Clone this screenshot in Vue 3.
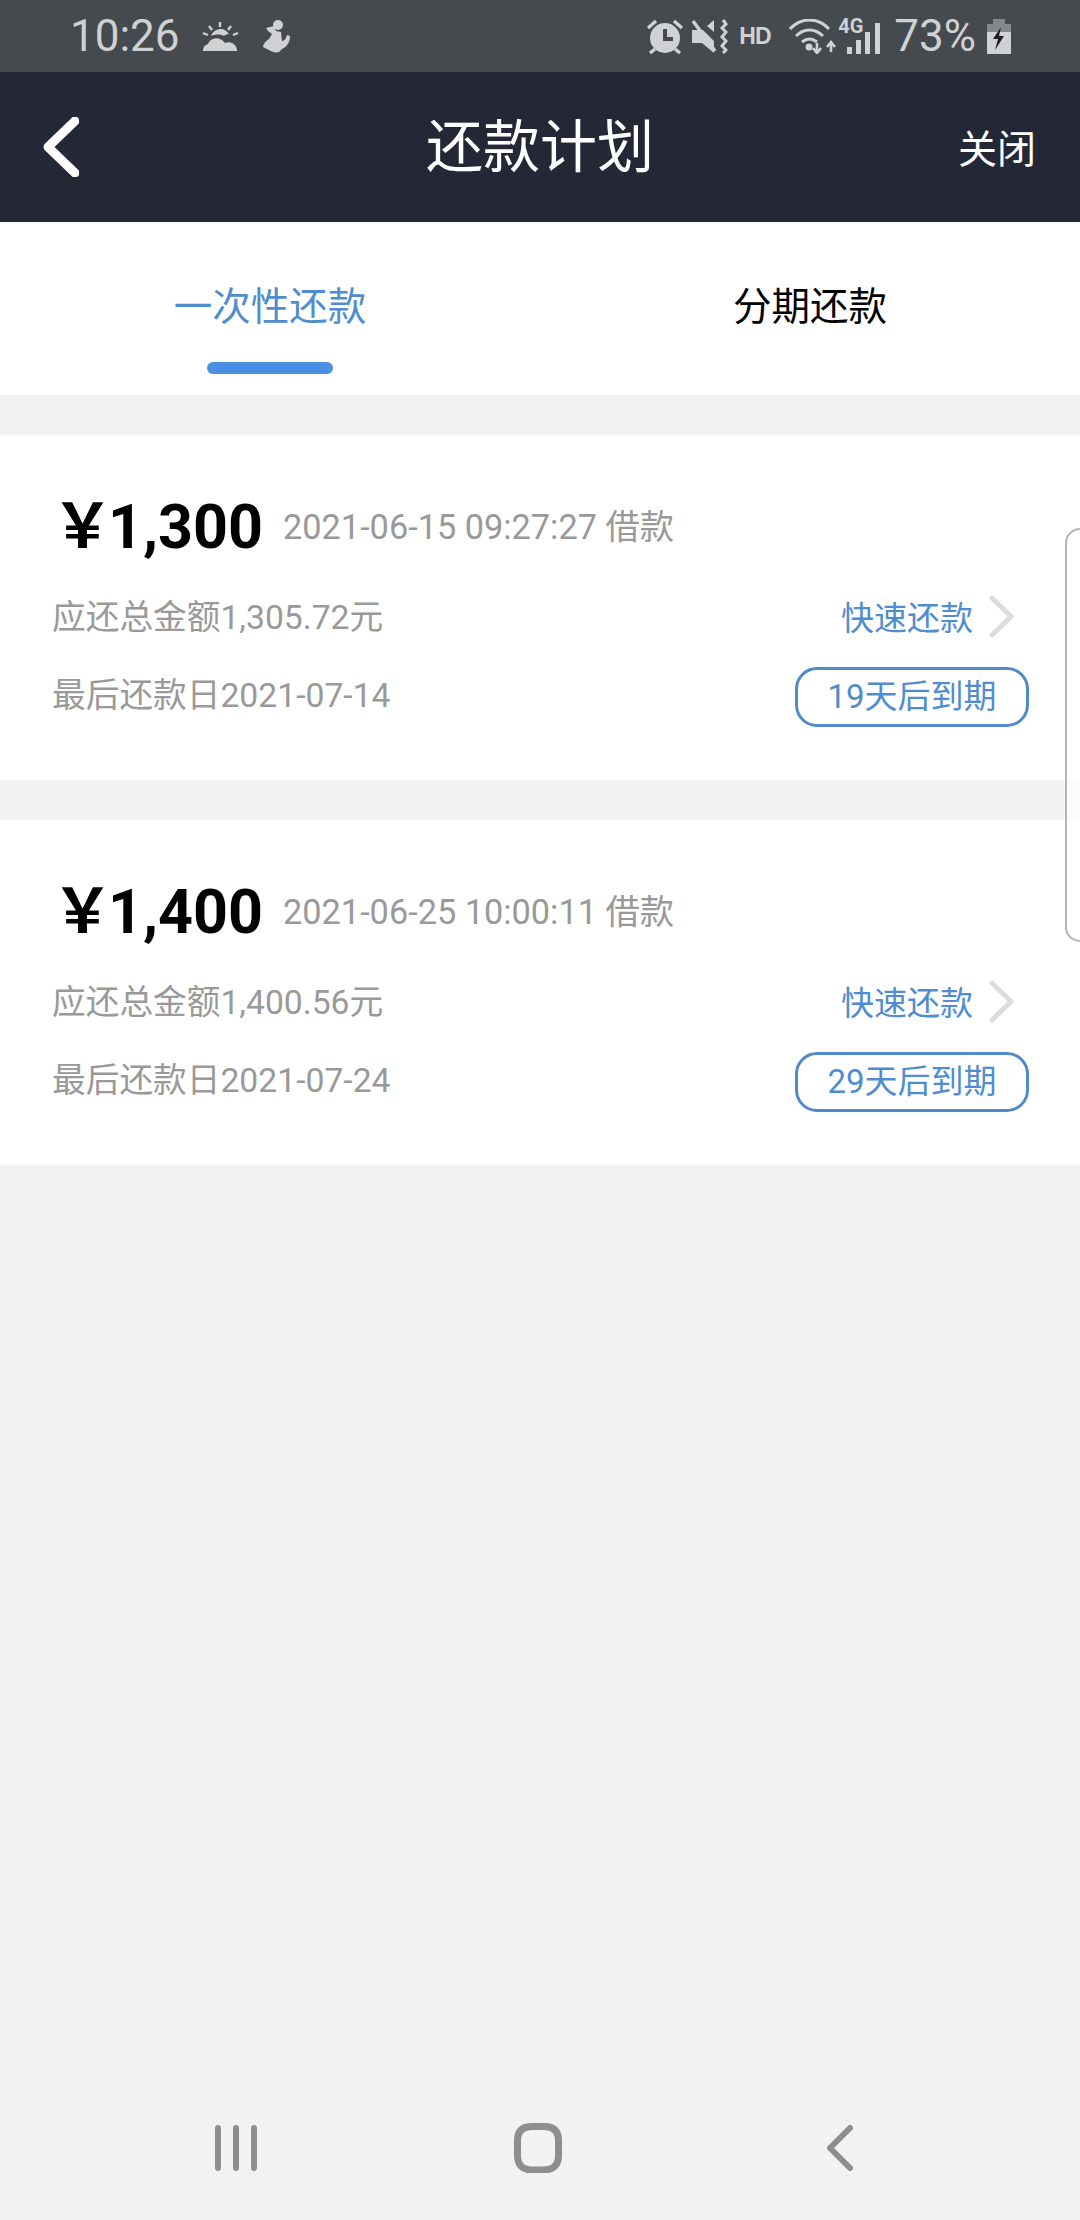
<script setup>
const currency = "\uFFE5";
const loans = [
  { amount: "1,300", time: "2021-06-15 09:27:27 借款", total: "应还总金额1,305.72元", last: "最后还款日2021-07-14", due: "19天后到期" },
  { amount: "1,400", time: "2021-06-25 10:00:11 借款", total: "应还总金额1,400.56元", last: "最后还款日2021-07-24", due: "29天后到期" },
];
</script>

<template>
  <div class="page">
    <div class="status">
      <span class="clock">10:26</span>
      <svg class="ic-weather" width="37" height="29" viewBox="0 0 37 29" fill="none">
        <path d="M18 0v5M7 4l3 4M29 4l-3 4M1 11l5 2M36 11l-5 2" stroke="#cfd1d3" stroke-width="2.4" />
        <path d="M9 14c2-5 6-7 10-7 3 0 6 2 8 5-2 0-4 1-5 2-3-2-9-2-13 0z" fill="#cfd1d3" />
        <path d="M1 29c0-4 2-6 5-7 2-5 8-7 12-5 3 1 4 3 5 4 5-2 10 1 11 4 1 2 1 3 1 4z" fill="#cfd1d3" />
      </svg>
      <svg class="ic-runner" width="29" height="33" viewBox="0 0 29 33" fill="#cfd1d3">
        <circle cx="16" cy="5" r="5" />
        <path d="M4 8l8-2 2 5 5 1 1 9c2 0 4-2 5-6l3 1c0 6-3 11-8 13l-3 3c-3 1-7 0-10-2l-6-3c0-3 3-6 6-8l3-5-4-3z" />
      </svg>
      <span class="grow"></span>
      <svg class="ic-alarm" width="38" height="35" viewBox="0 0 38 35" fill="none">
        <circle cx="19" cy="19" r="15" fill="#cfd1d3" />
        <path d="M19 10v10h8" stroke="#454a4e" stroke-width="4" />
        <path d="M2 9l8-7M36 9l-8-7M9 30l-5 4M29 30l5 4" stroke="#cfd1d3" stroke-width="3.5" />
      </svg>
      <svg class="ic-mute" width="36" height="35" viewBox="0 0 36 35" fill="none">
        <path d="M5 11h6l11 11v12L10 24H0V11z" fill="#cfd1d3" />
        <path d="M15 7l7-6v12z" fill="#cfd1d3" />
        <path d="M1 2l22 30" stroke="#cfd1d3" stroke-width="3.5" />
        <path d="M31 1l3 4-4 4 4 4-4 5 4 4-4 5 4 4-3 3" stroke="#cfd1d3" stroke-width="3" />
      </svg>
      <span class="hd">HD</span>
      <svg class="ic-wifi" width="48" height="35" viewBox="0 0 48 35" fill="none">
        <path d="M1 10c11-12 28-12 39 0M7 17c8-8 19-8 27 0M13 23c5-4 10-4 15 0" stroke="#cfd1d3" stroke-width="3" />
        <circle cx="20" cy="28" r="3.500" fill="#cfd1d3" />
        <path d="M28 24v8M24 29l4 5 4-5M42 33v-8M38 28l4-5 4 5" stroke="#cfd1d3" stroke-width="2.6" />
      </svg>
      <div class="signal">
        <span class="g4">4G</span>
        <svg width="33" height="31" viewBox="0 0 33 31" fill="#cfd1d3">
          <rect x="0" y="24" width="5" height="7" />
          <rect x="9" y="17" width="5" height="14" />
          <rect x="18" y="9" width="5" height="22" />
          <rect x="28" y="0" width="5" height="31" />
        </svg>
      </div>
      <span class="pct">73%</span>
      <svg class="ic-batt" width="24" height="35" viewBox="0 0 24 35">
        <path d="M6 0h12v5h6v9H0V5h6z" fill="#85888b" />
        <path d="M0 12h24v23H0z" fill="#cfd1d3" />
        <path d="M0 5h24v8H0z" fill="#85888b" />
        <path d="M14 8L6 20h5l-3 11 9-14h-5z" fill="#1d1f22" />
      </svg>
    </div>

    <div class="bar">
      <svg class="back" width="37" height="60" viewBox="0 0 37 60" fill="none">
        <path d="M33 4L6 30l27 26" stroke="#fff" stroke-width="9" stroke-linecap="round" stroke-linejoin="round" />
      </svg>
      <span class="title">还款计划</span>
      <span class="close">关闭</span>
    </div>

    <div class="tabs">
      <div class="tab active">
        <span>一次性还款</span>
        <i class="line"></i>
      </div>
      <div class="tab"><span>分期还款</span></div>
    </div>

    <div class="card" v-for="item in loans" :key="item.time">
      <div class="head">
        <span class="amount"><span class="cur">{{ currency }}</span>{{ item.amount }}</span>
        <span class="time">{{ item.time }}</span>
      </div>
      <div class="row row-total">
        <span class="total">{{ item.total }}</span>
        <span class="pay">
          快速还款
          <svg width="25" height="43" viewBox="0 0 25 43" fill="none">
            <path d="M3 3l19 18.500L3 40" stroke="#dcdcdc" stroke-width="5" stroke-linecap="round" stroke-linejoin="round" />
          </svg>
        </span>
      </div>
      <div class="row row-last">
        <span class="last">{{ item.last }}</span>
        <span class="due">{{ item.due }}</span>
      </div>
    </div>

    <span class="grow"></span>

    <div class="nav">
      <svg width="42" height="46" viewBox="0 0 42 46" fill="none" stroke="#8e8e8e" stroke-width="6" stroke-linecap="round">
        <path d="M3 3v40M21 3v40M39 3v40" />
      </svg>
      <svg class="home" width="48" height="50" viewBox="0 0 48 50" fill="none">
        <path d="M18 3.500h12c10 0 14.500 5 14.500 14v15c0 9-4.500 14.500-14.500 14.500H18C8 47 3.500 41.500 3.500 32.500v-15C3.500 8.500 8 3.500 18 3.500z" stroke="#8e8e8e" stroke-width="7" />
      </svg>
      <svg class="tri" width="26" height="46" viewBox="0 0 26 46" fill="none">
        <path d="M23 3L3 23l20 20" stroke="#8e8e8e" stroke-width="6" stroke-linecap="round" stroke-linejoin="round" />
      </svg>
    </div>

    <div class="edge"></div>
  </div>
</template>

<style>
body {
  margin: 0;
}
</style>

<style scoped>
.page {
  position: relative;
  width: 1080px;
  height: 2220px;
  display: flex;
  flex-direction: column;
  background: #f2f2f2;
  overflow: hidden;
  font-family: Roboto, "Noto Sans CJK SC", sans-serif;
}
.grow {
  flex: 1;
}

.status {
  height: 72px;
  padding: 0 69px 0 70px;
  box-sizing: border-box;
  display: flex;
  align-items: center;
  background: #454a4e;
  color: #cfd1d3;
}
.clock,
.pct {
  font-size: 44px;
  line-height: 72px;
}
.ic-weather {
  margin-left: 22px;
}
.ic-runner {
  margin-left: 23px;
}
.ic-mute {
  margin-left: 8px;
}
.hd {
  margin-left: 11px;
  width: 30px;
  font-size: 23px;
  font-weight: 700;
  font-family: "Liberation Sans", sans-serif;
  letter-spacing: -1px;
}
.ic-wifi {
  margin-left: 20px;
}
.signal {
  position: relative;
  width: 42px;
  height: 35px;
  margin-left: 1px;
  display: flex;
  justify-content: flex-end;
  align-items: flex-end;
}
.g4 {
  position: absolute;
  left: 0;
  top: -3px;
  font-size: 20px;
  font-weight: 700;
  line-height: 20px;
}
.pct {
  margin-left: 14px;
}
.ic-batt {
  margin-left: 11px;
}

.bar {
  position: relative;
  height: 150px;
  display: flex;
  align-items: center;
  justify-content: space-between;
  padding: 0 44px 0 42px;
  background: #232736;
  color: #fff;
}
.title {
  position: absolute;
  left: 0;
  right: 0;
  top: 0;
  text-align: center;
  font-size: 57px;
  line-height: 152px;
}
.close {
  font-size: 39px;
  margin-bottom: 3px;
}

.tabs {
  height: 173px;
  display: grid;
  grid-template-columns: 1fr 1fr;
  background: #fff;
  margin-bottom: 40px;
}
.tab {
  display: flex;
  flex-direction: column;
  align-items: center;
  padding-top: 61px;
  font-size: 38.500px;
  line-height: 48px;
  color: #000;
}
.tab.active {
  color: #4f8dd0;
}
.line {
  width: 126px;
  height: 12px;
  margin-top: 31px;
  border-radius: 6px;
  background: #4a90e2;
}

.card {
  height: 345px;
  box-sizing: border-box;
  margin-bottom: 40px;
  padding: 60px 51px 0 52px;
  background: #fff;
  color: #999;
  font-size: 33.700px;
}
.head {
  display: flex;
  align-items: center;
  height: 66px;
}
.amount {
  font-size: 61px;
  font-weight: 700;
  color: #000;
  margin-bottom: 14px;
}
.cur {
  margin-right: -5px;
}
.time {
  margin-left: 20px;
  margin-bottom: 8px;
  font-size: 34.300px;
}
.row {
  display: flex;
  align-items: center;
  justify-content: space-between;
}
.row-total {
  height: 60px;
  margin-top: 25px;
}
.row-last {
  height: 60px;
  margin-top: 21px;
}
.total {
  margin-bottom: 3px;
}
.last {
  margin-bottom: 10px;
}
.pay {
  display: flex;
  align-items: center;
  gap: 16px;
  margin-right: 15px;
  color: #4f8dd0;
  font-size: 33px;
}
.due {
  width: 234px;
  height: 60px;
  box-sizing: border-box;
  border: 3px solid #5289c8;
  border-radius: 22px;
  color: #4f8dd0;
  font-size: 33px;
  text-align: center;
  line-height: 54px;
}

.nav {
  height: 144px;
  display: flex;
  align-items: center;
  padding-left: 215px;
}
.home {
  margin-left: 257px;
}
.tri {
  margin-left: 265px;
}

.edge {
  position: absolute;
  left: 1065px;
  top: 528px;
  width: 15px;
  height: 414px;
  box-sizing: border-box;
  border: 2px solid #b5b5b5;
  border-right: none;
  border-radius: 16px 0 0 16px;
  background: rgba(255, 255, 255, 0.7);
}
</style>
